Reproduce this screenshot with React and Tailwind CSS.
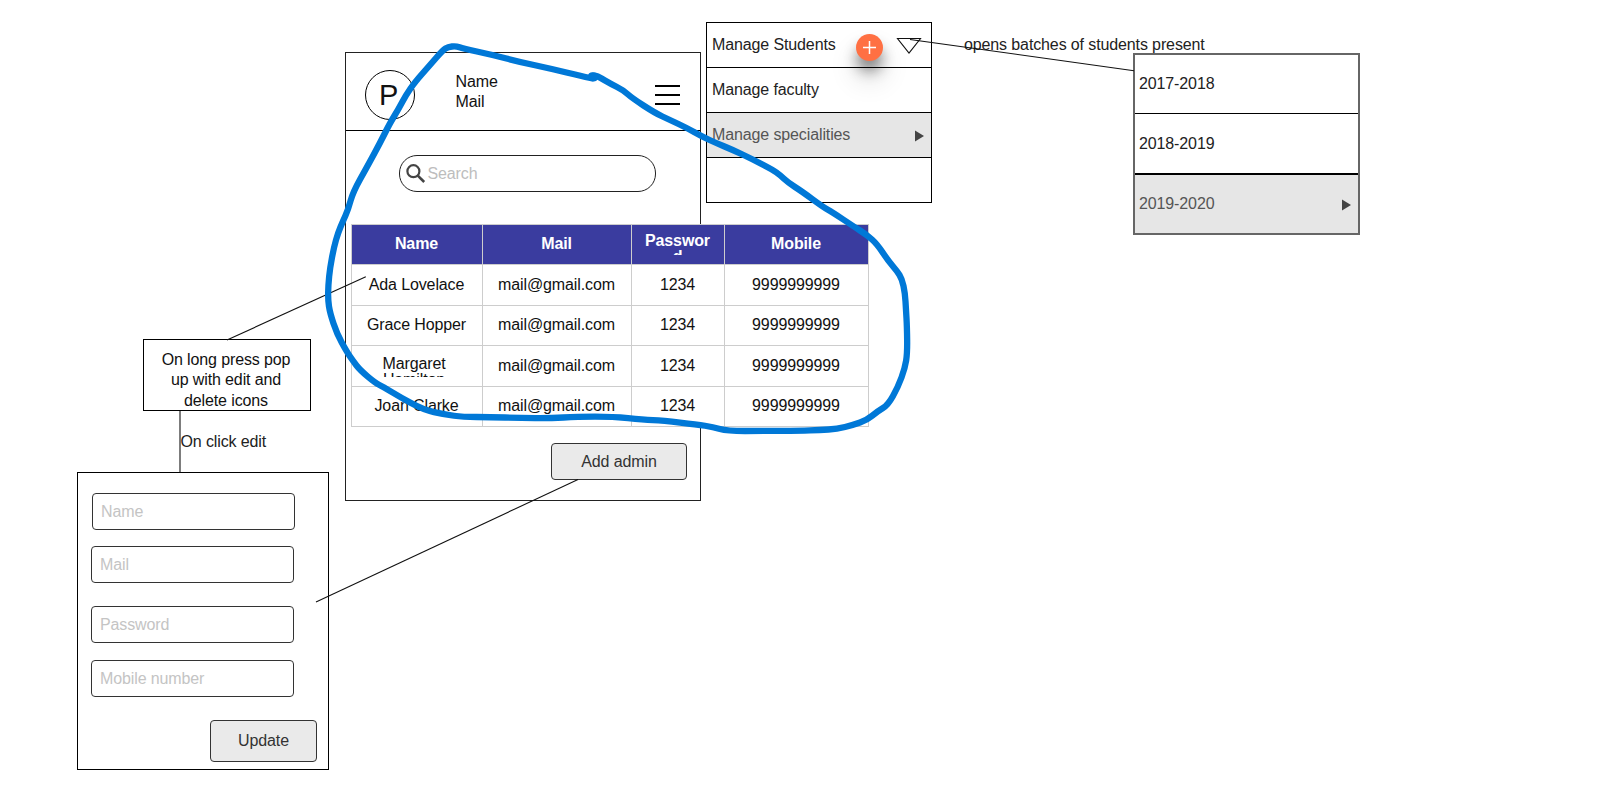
const ROWS = [
  { name: 'Ada Lovelace', height: 'h-10', pad: 'pb-0' },
  { name: 'Grace Hopper', height: 'h-[39px]', pad: 'pb-0.5' },
  { name: 'Margaret Hamilton', height: 'h-10', pad: 'pb-0', wrap: true },
  { name: 'Joan Clarke', height: 'h-[39px]', pad: 'pb-0.5' },
];

function HeaderCell({ children }) {
  return (
    <div className="flex items-center justify-center bg-[#3a3c9f] pb-px pl-[11.5px] pr-[12.5px] font-bold text-white">
      <div className="max-h-[22px] w-full overflow-hidden text-center leading-4 break-all">{children}</div>
    </div>
  );
}

function Cell({ children, wrap, pad }) {
  return (
    <div className={`flex items-center bg-white ${wrap ? 'pl-1.5 pr-3' : `pr-px ${pad}`}`}>
      <div
        className={
          wrap
            ? 'h-[21px] w-full overflow-hidden text-center leading-4'
            : 'w-full text-center leading-5 whitespace-nowrap'
        }
      >
        {children}
      </div>
    </div>
  );
}

function AdminTable() {
  return (
    <div className="absolute left-[351px] top-[224px] flex w-[518px] flex-col gap-px bg-[#cdcdcd] p-px">
      <div className="grid h-[39px] grid-cols-[130px_148px_92px_143px] gap-px">
        {['Name', 'Mail', 'Password', 'Mobile'].map((h) => (
          <HeaderCell key={h}>{h}</HeaderCell>
        ))}
      </div>
      {ROWS.map(({ name, height, pad, wrap }) => (
        <div key={name} className={`grid grid-cols-[130px_148px_92px_143px] gap-px ${height}`}>
          <Cell wrap={wrap} pad={pad}>
            {name}
          </Cell>
          <Cell pad={pad}>mail@gmail.com</Cell>
          <Cell pad={pad}>1234</Cell>
          <Cell pad={pad}>9999999999</Cell>
        </div>
      ))}
    </div>
  );
}

function Phone() {
  return (
    <div className="absolute left-[345px] top-[52px] flex h-[449px] w-[356px] flex-col border border-[#222]">
      <header className="flex h-[78px] items-start border-b border-black pl-[19px] pr-5">
        <div className="mt-[17px] flex size-[50px] shrink-0 items-center justify-center rounded-full border border-black pr-[3px] text-[29px] leading-none">
          P
        </div>
        <div className="ml-[40.5px] mt-[19px] flex-1 leading-5">
          <div>Name</div>
          <div>Mail</div>
        </div>
        <div className="mt-8 flex w-[25px] flex-col gap-[7px]">
          <div className="h-0.5 bg-black" />
          <div className="h-0.5 bg-black" />
          <div className="h-0.5 bg-black" />
        </div>
      </header>
      <div className="ml-[53px] mt-6 flex h-[37px] w-[257px] items-center rounded-[18px] border border-[#222] pl-1.5">
        <svg className="mt-px size-5 shrink-0" viewBox="0 0 20 20" fill="none" stroke="#444" strokeWidth="2.2">
          <circle cx="7.4" cy="7.2" r="6" />
          <path d="M11.8 11.6 L18.2 18" strokeWidth="2.6" />
        </svg>
        <span className="ml-[1.5px] text-[#bdbdbd]">Search</span>
      </div>
      <div className="mb-5 ml-[205px] mt-auto flex h-[37px] w-[136px] items-center justify-center rounded border border-[#333] bg-[#eaeaea] text-[#333]">
        Add admin
      </div>
    </div>
  );
}

function Arrow() {
  return (
    <svg className="mt-0.5 h-3 w-[9px]" viewBox="0 0 9 12">
      <path d="M0 0.5 L9 6 L0 11.5 Z" fill="#444" />
    </svg>
  );
}

function ManageMenu() {
  return (
    <div className="absolute left-[706px] top-[22px] flex w-[226px] flex-col divide-y divide-black border border-black">
      <div className="flex h-[45px] items-center pl-[5px] text-[#222]">Manage Students</div>
      <div className="flex h-[45px] items-center pl-[5px] text-[#222]">Manage faculty</div>
      <div className="flex h-[45px] items-center justify-between bg-[#e6e6e6] pl-[5px] pr-[7.5px] text-[#555]">
        <span>Manage specialities</span>
        <Arrow />
      </div>
      <div className="h-[44px]" />
    </div>
  );
}

function AddButton() {
  return (
    <div className="absolute left-[856px] top-[34px] flex size-[27px] items-center justify-center rounded-full bg-[#ff7043] shadow-[0_11px_14px_-1px_rgba(0,0,0,0.45),0_18px_26px_4px_rgba(0,0,0,0.1)]">
      <svg className="size-[13px]" viewBox="0 0 13 13" stroke="#fff" strokeWidth="1.5">
        <path d="M6.5 0 V13 M0 6.5 H13" />
      </svg>
    </div>
  );
}

function BatchMenu() {
  return (
    <div className="absolute left-[1133px] top-[53px] flex h-[182px] w-[227px] flex-col border-2 border-[#666]">
      <div className="flex h-[59px] items-center border-b border-black pl-1 text-[#222]">2017-2018</div>
      <div className="flex h-[61px] items-center border-b-2 border-black pl-1 text-[#222]">2018-2019</div>
      <div className="flex flex-1 items-center justify-between bg-[#e6e6e6] pl-1 pr-[7px] text-[#555]">
        <span>2019-2020</span>
        <Arrow />
      </div>
    </div>
  );
}

function Field({ label, className }) {
  return (
    <div
      className={`flex h-[37px] w-[203.5px] items-center rounded border border-[#333] pl-[8.5px] text-[#c4c4c4] ${className}`}
    >
      {label}
    </div>
  );
}

function EditForm() {
  return (
    <div className="absolute left-[77px] top-[472px] flex h-[298px] w-[252px] flex-col border border-black pl-[12.5px] pr-[11px]">
      <Field label="Name" className="ml-px mt-5" />
      <Field label="Mail" className="mt-4" />
      <Field label="Password" className="mt-[23px]" />
      <Field label="Mobile number" className="mt-[17px]" />
      <div className="mt-[23px] flex h-[42px] w-[107px] items-center justify-center self-end rounded border border-[#333] bg-[#eaeaea] text-[#333]">
        Update
      </div>
    </div>
  );
}

const LASSO = [
  [348, 210], [353, 192], [367, 167], [380, 143], [390, 123], [398, 110], [406, 95], [415, 82], [430, 65],
  [443, 50], [448, 47], [456, 46], [463, 48.5], [493, 55], [520, 62], [550, 68.5], [583, 76.5], [595, 79],
  [590, 75.5], [595, 75.5], [599, 77], [611, 84], [623, 90], [632, 98], [655, 113], [670, 120], [687, 128],
  [702, 136.5], [716, 143], [733, 150], [752, 159], [773, 170], [780, 175], [788, 182.5], [802, 191.5],
  [823, 207], [832, 212], [853, 226], [867, 235], [877, 244], [888, 260.5], [897, 271], [902, 279],
  [905, 293], [906, 310], [907, 327], [907.3, 353], [905, 368], [898, 387], [888, 405], [878, 411],
  [867, 420], [853, 425], [837, 429], [820, 430], [800, 430.7], [763, 431], [727, 431], [713, 427],
  [697, 424.5], [663, 420.7], [643, 419.7], [613, 416.7], [577, 416.7], [550, 418.3], [520, 418], [490, 417],
  [463, 417], [445, 414.5], [423, 409.7], [400, 397], [383, 386.7], [375, 382.7], [360, 370], [353, 361],
  [346.7, 351.7], [337, 334], [330, 313], [328, 300], [328.3, 285], [330, 268], [334, 247], [338, 233],
  [343, 221],
];

// Closed curve that rounds each corner by passing through the segment midpoints.
function closedCurve(points) {
  const mid = (a, b) => [(a[0] + b[0]) / 2, (a[1] + b[1]) / 2];
  const start = mid(points[points.length - 1], points[0]);
  const parts = points.map((p, i) => {
    const m = mid(p, points[(i + 1) % points.length]);
    return `Q${p[0]} ${p[1]} ${m[0]} ${m[1]}`;
  });
  return `M${start[0]} ${start[1]} ${parts.join(' ')} Z`;
}

export default function App() {
  return (
    <main className="relative h-[805px] w-[1613px] overflow-hidden bg-white font-['Liberation_Sans',Arial,sans-serif] text-base leading-5 tracking-[-0.12px] text-[#111]">
      <Phone />
      <AdminTable />
      <ManageMenu />
      <AddButton />
      <div className="absolute left-[964px] top-[35px] whitespace-nowrap text-[#222]">
        opens batches of students present
      </div>
      <BatchMenu />
      <div className="absolute left-[143px] top-[339px] h-[72px] w-[168px] border border-black pl-[15px] pr-[17px] pt-[10px] text-center leading-[20.4px]">
        On long press pop up with edit and delete icons
      </div>
      <div className="absolute left-[180.5px] top-[432px] whitespace-nowrap text-[#222]">On click edit</div>
      <EditForm />
      <svg className="absolute inset-0 h-[805px] w-[1613px]" viewBox="0 0 1613 805" fill="none">
        <g stroke="#111" strokeWidth="1.1">
          <path d="M897.5 38.5 H920.5 L909 53 Z" />
          <path d="M910 39.5 L1134 70.7" />
          <path d="M227 340 L365.8 276.8" />
          <path d="M180 411 V472.5" />
          <path d="M578 479.5 L316 602" />
        </g>
        <path d={closedCurve(LASSO)} stroke="#0078d7" strokeWidth="6.3" strokeLinejoin="round" />
        <circle cx="593.5" cy="77" r="4.6" fill="#0078d7" />
      </svg>
    </main>
  );
}
